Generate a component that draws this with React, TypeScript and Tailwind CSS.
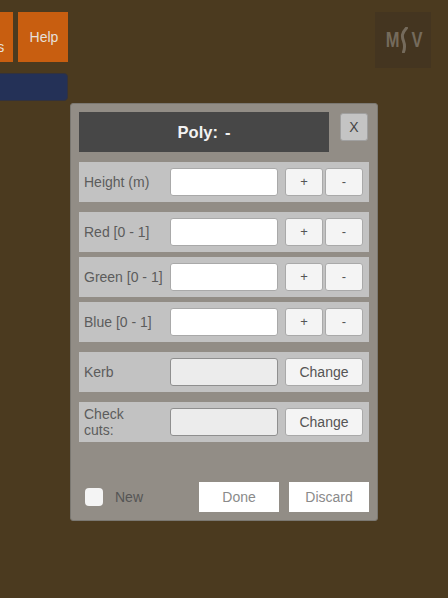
import React from 'react';

const FONT = 'font-["Liberation_Sans",Arial,sans-serif]';

function StepButton({ label }: { label: string }) {
  return (
    <button className="flex h-[28px] w-[38px] items-center justify-center rounded-[3px] border border-[#a9a9a9] bg-[#f4f4f4] text-[13px] text-[#555555]">
      {label}
    </button>
  );
}

function NumberRow({ label, className }: { label: string; className?: string }) {
  return (
    <div className={`flex h-[40px] items-center bg-[#c2c2c2] pl-[5px] ${className ?? ''}`}>
      <span className="w-[86px] whitespace-nowrap text-[14px] text-[#5c5c5c]">{label}</span>
      <div className="h-[28px] w-[108px] rounded-[3px] border border-[#a9a9a9] bg-white" />
      <div className="ml-[7px] flex gap-[2px]">
        <StepButton label="+" />
        <StepButton label="-" />
      </div>
    </div>
  );
}

function ChangeRow({ label, className }: { label: string; className?: string }) {
  return (
    <div className={`flex h-[40px] items-center bg-[#c2c2c2] pl-[5px] ${className ?? ''}`}>
      <span className="w-[86px] pr-[30px] text-[14px] leading-[16px] text-[#5c5c5c]">{label}</span>
      <div className="h-[28px] w-[108px] rounded-[3px] border border-[#8f8f8f] bg-[#ececec]" />
      <button className="ml-[7px] h-[28px] w-[78px] rounded-[3px] border border-[#a9a9a9] bg-[#f4f4f4] text-[14px] text-[#555555]">
        Change
      </button>
    </div>
  );
}

function Logo() {
  return (
    <div className="absolute left-[375px] top-[12px] flex h-[56px] w-[56px] items-center justify-center bg-[#443520] text-[#756b5c]">
      <span className="inline-block w-[14px] origin-center scale-x-[0.75] text-center text-[22px] font-bold leading-none">M</span>
      <svg width="10" height="26" viewBox="0 0 10 26" fill="none" className="mx-[1px]">
        <path d="M7.5 1 C3 6 2.5 9 4.5 14 C6 18 6 21 4.5 25" stroke="currentColor" strokeWidth="3" strokeLinecap="round" />
      </svg>
      <span className="inline-block w-[12px] origin-center scale-x-[0.75] text-center text-[22px] font-bold leading-none">V</span>
    </div>
  );
}

export default function App() {
  return (
    <div className={`relative h-[598px] w-[448px] overflow-hidden bg-[#4b3a1f] ${FONT}`}>
      {/* top left menu, runs off the page */}
      <div className="absolute left-[-37px] top-[12px] flex w-[105px] flex-col gap-[11px]">
        <div className="flex gap-[5px]">
          <button className="flex h-[50px] w-[50px] items-center justify-center bg-[#c85e10] pt-[20px] text-[14px] text-[#e6e0dc]">
            Tools
          </button>
          <button className="flex h-[50px] w-[50px] items-center justify-center bg-[#c85e10] pl-[2px] text-[14px] text-[#e6e0dc]">
            Help
          </button>
        </div>
        <div className="h-[28px] rounded-[4px] border border-[#33323c] bg-[#243157]" />
      </div>

      <Logo />

      {/* Poly window */}
      <div className="absolute left-[70px] top-[103px] h-[418px] w-[308px] rounded-[3px] border border-[#7b7872] bg-[#928d86] px-[8px] pt-[8px]">
        <div className="flex items-start">
          <div className="flex h-[40px] w-[250px] items-center justify-center gap-[7px] bg-[#474747] text-[16.5px] font-bold text-[#f2f2f2]">
            <span>Poly:</span>
            <span>-</span>
          </div>
          <button className="ml-[11px] mt-[1px] h-[28px] w-[28px] rounded-[3px] border border-[#a0a0a0] bg-[#c4c4c4] text-[14px] text-[#444444]">
            X
          </button>
        </div>

        <div className="w-[290px]">
          <NumberRow label="Height (m)" className="mt-[10px]" />
          <NumberRow label="Red [0 - 1]" className="mt-[10px]" />
          <NumberRow label="Green [0 - 1]" className="mt-[5px]" />
          <NumberRow label="Blue [0 - 1]" className="mt-[5px]" />
          <ChangeRow label="Kerb" className="mt-[10px]" />
          <ChangeRow label="Check cuts:" className="mt-[10px]" />

          <div className="mt-[40px] flex items-center">
            <div className="ml-[6px] h-[18px] w-[18px] rounded-[4px] bg-[#f4f4f4]" />
            <span className="ml-[12px] text-[14px] text-[#555555]">New</span>
            <button className="ml-auto h-[30px] w-[80px] bg-white text-[14px] text-[#8a8a8a]">Done</button>
            <button className="ml-[10px] h-[30px] w-[80px] bg-white text-[14px] text-[#8a8a8a]">Discard</button>
          </div>
        </div>
      </div>
    </div>
  );
}
